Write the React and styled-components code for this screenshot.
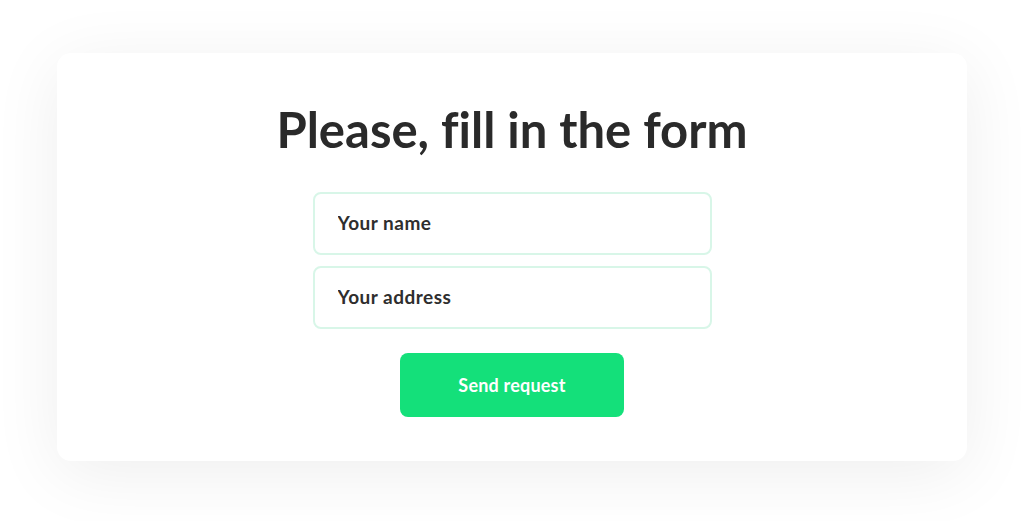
import styled, { createGlobalStyle } from "styled-components";

const GlobalStyle = createGlobalStyle`
  * { box-sizing: border-box; }
  body {
    margin: 0;
    background: #ffffff;
    font-family: "Lato", "Noto Sans", sans-serif;
  }
`;

const Page = styled.div`
  width: 1024px;
  height: 521px;
  padding: 53px 57px 60px 57px;
  background: #ffffff;
`;

const Card = styled.form`
  width: 910px;
  height: 408px;
  background: #ffffff;
  border-radius: 14px;
  box-shadow: 0 12px 70px rgba(0, 0, 0, 0.07);
  display: flex;
  flex-direction: column;
  align-items: center;
  padding-top: 46px;
`;

const Title = styled.h1`
  margin: 0 0 33px;
  font-family: "Lato", sans-serif;
  font-weight: 700;
  font-size: 49px;
  line-height: 60px;
  color: #2a2a2a;
  font-variant-ligatures: none;
`;

const Fields = styled.div`
  display: flex;
  flex-direction: column;
  gap: 11px;
  width: 399px;
`;

const Input = styled.input`
  width: 100%;
  height: 63px;
  border: 2px solid #d8f6e8;
  border-radius: 8px;
  padding: 0 23px 3px;
  font-family: "Lato", sans-serif;
  font-weight: 700;
  font-size: 19px;
  letter-spacing: 0.5px;
  color: #2b2b2b;
  background: #ffffff;
  outline: none;

  &::placeholder {
    color: #2e2e2e;
    opacity: 1;
  }
`;

const Button = styled.button`
  margin-top: 24px;
  width: 224px;
  height: 64px;
  border: none;
  border-radius: 8px;
  background: #14e07a;
  color: #ffffff;
  font-family: "Lato", sans-serif;
  font-weight: 700;
  font-size: 18px;
  letter-spacing: 0.2px;
  padding-bottom: 2px;
  cursor: pointer;
`;

export default function App() {
  return (
    <>
      <GlobalStyle />
      <Page>
        <Card onSubmit={(e) => e.preventDefault()}>
          <Title>Please, fill in the form</Title>
          <Fields>
            <Input placeholder="Your name" />
            <Input placeholder="Your address" />
          </Fields>
          <Button type="submit">Send request</Button>
        </Card>
      </Page>
    </>
  );
}
